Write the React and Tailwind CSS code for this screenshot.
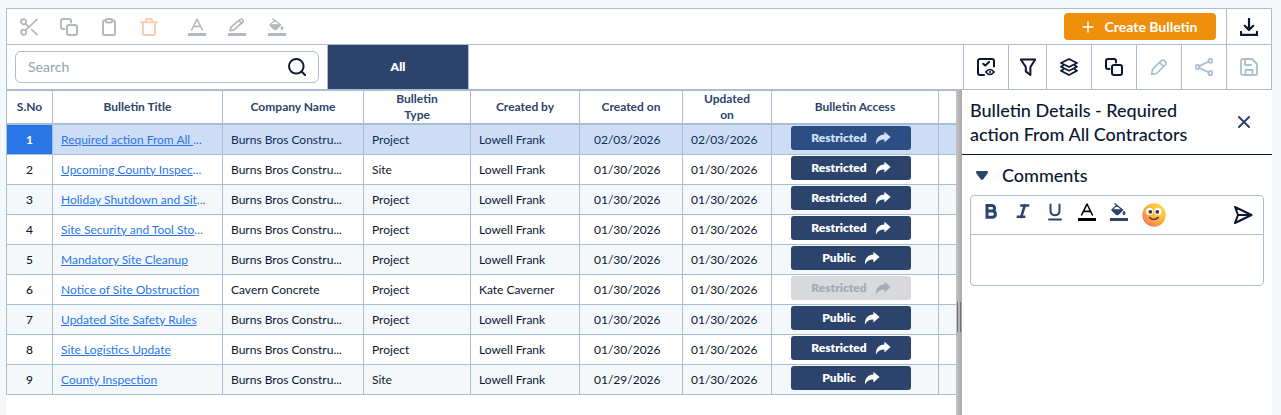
import React from "react";
import clsx from "clsx";

const rows = [
  { title: "Required action From All ...", company: "Burns Bros Constru...", type: "Project", by: "Lowell Frank", created: "02/03/2026", updated: "02/03/2026", access: "Restricted", selected: true },
  { title: "Upcoming County Inspec...", company: "Burns Bros Constru...", type: "Site", by: "Lowell Frank", created: "01/30/2026", updated: "01/30/2026", access: "Restricted" },
  { title: "Holiday Shutdown and Sit...", company: "Burns Bros Constru...", type: "Project", by: "Lowell Frank", created: "01/30/2026", updated: "01/30/2026", access: "Restricted" },
  { title: "Site Security and Tool Sto...", company: "Burns Bros Constru...", type: "Project", by: "Lowell Frank", created: "01/30/2026", updated: "01/30/2026", access: "Restricted" },
  { title: "Mandatory Site Cleanup", company: "Burns Bros Constru...", type: "Project", by: "Lowell Frank", created: "01/30/2026", updated: "01/30/2026", access: "Public" },
  { title: "Notice of Site Obstruction", company: "Cavern Concrete", type: "Project", by: "Kate Caverner", created: "01/30/2026", updated: "01/30/2026", access: "Restricted", disabled: true },
  { title: "Updated Site Safety Rules", company: "Burns Bros Constru...", type: "Project", by: "Lowell Frank", created: "01/30/2026", updated: "01/30/2026", access: "Public" },
  { title: "Site Logistics Update", company: "Burns Bros Constru...", type: "Project", by: "Lowell Frank", created: "01/30/2026", updated: "01/30/2026", access: "Restricted" },
  { title: "County Inspection", company: "Burns Bros Constru...", type: "Site", by: "Lowell Frank", created: "01/29/2026", updated: "01/30/2026", access: "Public" },
];

const Icon = ({ children, className = "size-[18px]", box = "0 0 18 18", stroke = 2 }) => (
  <svg
    viewBox={box}
    className={className}
    fill="none"
    stroke="currentColor"
    strokeWidth={stroke}
    strokeLinecap="round"
    strokeLinejoin="round"
    aria-hidden
  >
    {children}
  </svg>
);

const ScissorsIcon = () => (
  <Icon stroke={1.8}>
    <circle cx="3.6" cy="3.8" r="2.6" />
    <circle cx="3.6" cy="14.2" r="2.6" />
    <path d="M5.6 5.8 8.6 8.6M17 1.4 5.6 12.2M11.8 11.6 17 16.6" />
  </Icon>
);

const CopyIcon = () => (
  <Icon>
    <path d="M4.5 11H3a2 2 0 0 1-2-2V3a2 2 0 0 1 2-2h6a2 2 0 0 1 2 2v1.5" />
    <rect x="7" y="7" width="10" height="10" rx="2" />
  </Icon>
);

const ClipboardIcon = () => (
  <Icon>
    <path d="M6 2.5H4.5A1.5 1.5 0 0 0 3 4v11.5A1.5 1.5 0 0 0 4.500 17h9a1.500 1.500 0 0 0 1.500-1.500V4a1.500 1.500 0 0 0-1.500-1.500H12" />
    <rect x="6" y="1" width="6" height="3.4" rx="1" />
  </Icon>
);

const TrashIcon = () => (
  <Icon>
    <path d="M1 4.200h16M6 4V1.800q0-.8.8-.8h4.400q.8 0 .8.8V4M3 4.500V15.500q0 1.500 1.500 1.500h9q1.500 0 1.500-1.500V4.500" />
  </Icon>
);

const TextColorIcon = () => (
  <Icon stroke={1.6}>
    <path d="M3.600 12 9 1l5.400 11M5.600 8.400h6.800" />
    <path d="M0 15h18v3H0z" fill="currentColor" stroke="none" />
  </Icon>
);

const HighlightIcon = () => (
  <Icon stroke={1.7}>
    <path d="m2.200 12.600.8-3.400 8.800-7.600q1.600-1.200 2.800.1 1.200 1.300-.2 2.800L5.600 12.100ZM11 2.600l2.800 3" />
    <path d="M0 15h18v3H0z" fill="currentColor" stroke="none" />
  </Icon>
);

const FillColorIcon = () => (
  <Icon stroke={1.3}>
    <path d="m4.800.8 7.600 6L8 11.200q-.8.600-1.500 0L2.400 7.600q-.5-.6 0-1.200L6.600 2.400" />
    <path d="M2.200 6.800h10.400L8 11.200q-.8.600-1.500 0Z" fill="currentColor" />
    <path d="M14 8.600q1.700 2.200 0 2.700-1.700-.5 0-2.700Z" fill="currentColor" />
    <path d="M0 15h18v3H0z" fill="currentColor" stroke="none" />
  </Icon>
);

const SearchIcon = () => (
  <Icon className="size-[18px] text-[#0b1a33]">
    <circle cx="8.3" cy="8.3" r="7.3" />
    <path d="m13.800 13.800 3.600 3.600" />
  </Icon>
);

const ReviewIcon = () => (
  <Icon>
    <path d="M7 17H3a2 2 0 0 1-2-2V3a2 2 0 0 1 2-2h12a2 2 0 0 1 2 2v5.500" />
    <path d="m6.200 5.800 2 1.800 3.900-3.700" />
    <path d="M8.800 14q4.100-5 8.300 0-4.200 5-8.300 0Z" strokeWidth="1.7" />
    <circle cx="13" cy="14" r="1.1" fill="currentColor" stroke="none" />
  </Icon>
);

const FilterIcon = () => (
  <Icon>
    <path d="M1.800 1.500h14.400L11.400 9v8L6.800 13.400V9Z" />
  </Icon>
);

const LayersIcon = () => (
  <Icon stroke={1.8}>
    <path d="M9 1 17 5 9 9 1 5Z" />
    <path d="m3 7.600-2 1.100 8 4 8-4-2-1.100M3 11.600l-2 1.100L9 17l8-4.300-2-1.100" />
  </Icon>
);

const PencilIcon = () => (
  <Icon stroke={1.7}>
    <path d="m1.600 16.400.9-5 9-9q1.300-1.200 2.600 0l1.500 1.500q1.200 1.300 0 2.600l-9 9ZM9.600 4.600l3.900 3.900" />
  </Icon>
);

const ShareNodesIcon = () => (
  <Icon stroke={1.8}>
    <circle cx="15.4" cy="2.8" r="2" />
    <circle cx="15.4" cy="15.2" r="2" />
    <circle cx="2.4" cy="9" r="2" />
    <path d="m4.200 8.100 9.400-4.400M4.200 9.900l9.400 4.400" />
  </Icon>
);

const SaveIcon = () => (
  <Icon stroke={1.8}>
    <path d="M3 1h9l5 5v9a2 2 0 0 1-2 2H3a2 2 0 0 1-2-2V3a2 2 0 0 1 2-2Z" />
    <path d="M5 1.500V7h6M5.500 16.500V12h7v4.500" />
  </Icon>
);

const DownloadIcon = () => (
  <Icon stroke={2.2}>
    <path d="M9 1v10.500M4.800 7.800 9 12l4.200-4.200M1 13.800v3.100h16v-3.100" />
  </Icon>
);

const ShareArrow = () => (
  <svg viewBox="0 0 16 14" className="h-3.5 w-4" fill="currentColor" aria-hidden>
    <path d="M9.400.8 15.600 6 9.400 11.400V8.600C5.400 8.500 2.600 10 1 13.600.4 7.600 4 3.700 9.400 3.500Z" />
  </svg>
);

const BoldIcon = () => (
  <Icon stroke={3}>
    <path d="M5 2.500h5q2.600.2 2.600 2.700T10 8H5h5.600q2.800.2 2.800 3t-2.800 3.300H5Z" strokeLinejoin="miter" />
  </Icon>
);

const ItalicIcon = () => (
  <Icon stroke={2.6}>
    <path d="M7.500 2.500h6.500M4 13.800h6M10.800 2.500 7.200 13.800" strokeLinecap="square" />
  </Icon>
);

const UnderlineIcon = () => (
  <Icon>
    <path d="M4.500 1.500V7.500q0 4.700 4.500 4.700t4.500-4.700V1.500M3 16.500h12" />
  </Icon>
);

const SendIcon = () => (
  <Icon className="size-5" box="0 0 20 20">
    <path d="m2 2 16.500 8L2 18l3-8ZM5.500 10h12" />
  </Icon>
);

const Smiley = () => (
  <svg viewBox="0 0 24 24" className="size-6" aria-hidden>
    <defs>
      <radialGradient id="face" cx="0.7" cy="0.25" r="0.85">
        <stop offset="0" stopColor="#ffdc45" />
        <stop offset="0.6" stopColor="#ffb13a" />
        <stop offset="1" stopColor="#f5726a" />
      </radialGradient>
    </defs>
    <circle cx="12" cy="12" r="11.7" fill="url(#face)" />
    <circle cx="7.6" cy="8.6" r="3.5" fill="#fff" />
    <circle cx="16" cy="8.6" r="3.5" fill="#fff" />
    <circle cx="8.3" cy="8.8" r="1.9" fill="#4a2c48" />
    <circle cx="15.3" cy="8.8" r="1.9" fill="#4a2c48" />
    <path d="M7.500 14.400q4.200 4 9 0" fill="none" stroke="#5c3440" strokeWidth="1.4" strokeLinecap="round" />
  </svg>
);

const editTools = [
  { label: "Cut", icon: <ScissorsIcon /> },
  { label: "Copy", icon: <CopyIcon /> },
  { label: "Paste", icon: <ClipboardIcon /> },
  { label: "Delete", icon: <TrashIcon />, danger: true },
];

const colorTools = [
  { label: "Text color", icon: <TextColorIcon /> },
  { label: "Highlight", icon: <HighlightIcon /> },
  { label: "Fill color", icon: <FillColorIcon /> },
];

const viewTools = [
  { label: "Review", icon: <ReviewIcon /> },
  { label: "Filter", icon: <FilterIcon />, narrow: true },
  { label: "Layers", icon: <LayersIcon /> },
  { label: "Duplicate", icon: <CopyIcon /> },
  { label: "Edit", icon: <PencilIcon />, disabled: true },
  { label: "Share", icon: <ShareNodesIcon />, disabled: true },
  { label: "Save", icon: <SaveIcon />, disabled: true },
];

const Toolbar = () => (
  <header className="border border-b-0 border-[#a9bfd1]">
    <div className="flex h-9 items-stretch border-b border-[#a9bfd1]">
      <div className="flex flex-1 items-center gap-[22px] pl-[13px] text-[#b4b8bf]">
        {editTools.map((t) => (
          <button key={t.label} aria-label={t.label} disabled className={clsx(t.danger && "text-[#f8cdb8]")}>
            {t.icon}
          </button>
        ))}
        <div className="ml-2 flex gap-[22px]">
          {colorTools.map((t) => (
            <button key={t.label} aria-label={t.label} disabled>
              {t.icon}
            </button>
          ))}
        </div>
      </div>
      <div className="flex items-center pr-2.5">
        <button className="flex h-[27px] w-[152px] items-center justify-center gap-2.5 rounded bg-[#ee900b] text-sm font-bold text-white">
          <Icon className="size-3" box="0 0 12 12" stroke={1.5}>
            <path d="M6 1v10M1 6h10" />
          </Icon>
          Create Bulletin
        </button>
      </div>
      <button aria-label="Download" className="flex w-[45px] items-center justify-center border-l border-[#a9bfd1] text-[#0b1730]">
        <DownloadIcon />
      </button>
    </div>

    <div className="flex h-[45px] items-stretch border-b border-[#a9bfd1]">
      <div className="flex w-80 items-center px-2">
        <label className="flex h-8 w-full items-center rounded-md border border-[#a9bfd1] px-3">
          <input
            type="text"
            aria-label="Search"
            placeholder="Search"
            className="min-w-0 flex-1 text-sm outline-none placeholder:text-[#9a9fa8]"
          />
          <SearchIcon />
        </label>
      </div>
      <button className="w-[142px] border-x border-[#a9bfd1] bg-[#2c446b] text-xs font-extrabold text-white">
        All
      </button>
      <div className="flex-1" />
      {viewTools.map((t) => (
        <button
          key={t.label}
          aria-label={t.label}
          disabled={t.disabled}
          className={clsx(
            "flex items-center justify-center border-l border-[#a9bfd1]",
            t.narrow ? "w-[38px]" : "w-[45px]",
            t.disabled ? "text-[#a9bfd1]" : "text-[#0b1730]"
          )}
        >
          {t.icon}
        </button>
      ))}
    </div>
  </header>
);

const Th = ({ children }) => (
  <th className="h-[34px] border-r border-b-2 border-[#a9bfd1] p-0 leading-4 font-bold">
    {children}
  </th>
);

const Td = ({ children, className }) => (
  <td className={clsx("h-[30px] border-r border-b border-[#a9bfd1] py-0 whitespace-nowrap", className)}>{children}</td>
);

// Only the words are underlined, not the dots of a shortened title
const TitleLink = ({ title }) => (
  <>
    <a href="#" className="whitespace-pre underline">
      {title.replace("...", "")}
    </a>
    {title.endsWith("...") && "..."}
  </>
);

const BulletinTable = () => (
  <table className="w-full table-fixed border-separate border-spacing-0 border-t border-l border-[#a9bfd1] text-xs text-[#0b1730]">
    <colgroup>
      <col className="w-[46px]" />
      <col className="w-[170px]" />
      <col className="w-[141px]" />
      <col className="w-[107px]" />
      <col className="w-[109px]" />
      <col className="w-[103px]" />
      <col className="w-[89px]" />
      <col className="w-[167px]" />
      <col />
    </colgroup>
    <thead className="text-[#2c446b]">
      <tr>
        <Th>S.No</Th>
        <Th>Bulletin Title</Th>
        <Th>Company Name</Th>
        <Th>
          Bulletin
          <br />
          Type
        </Th>
        <Th>Created by</Th>
        <Th>Created on</Th>
        <Th>
          Updated
          <br />
          on
        </Th>
        <Th>Bulletin Access</Th>
        <td className="border-b-2 border-[#a9bfd1]" />
      </tr>
    </thead>
    <tbody>
      {rows.map((row, i) => (
        <tr key={row.title} className={row.selected ? "bg-[#cdddf5] text-[#112b59]" : "odd:bg-[#f4f8fb]"}>
          <Td className={clsx("text-center", row.selected ? "bg-[#2a76e8] font-bold text-white" : "font-medium")}>
            {i + 1}
          </Td>
          <Td className="px-2 text-[#2a76e8]">
            <TitleLink title={row.title} />
          </Td>
          <Td className="px-2">{row.company}</Td>
          <Td className="px-2">{row.type}</Td>
          <Td className="px-2">{row.by}</Td>
          <Td className="pl-3.5">{row.created}</Td>
          <Td className="px-2">{row.updated}</Td>
          <Td className="pt-px pr-2 align-top">
            <button
              disabled={row.disabled}
              className={clsx(
                "mx-auto flex h-6 w-[120px] items-center justify-center gap-2 rounded-[3px] font-extrabold",
                row.disabled
                  ? "bg-[#d7d9dd] text-[#a5abb6]"
                  : row.selected
                    ? "bg-[#2c4e85] text-[#d3e2f9]"
                    : "bg-[#2c446b] text-white"
              )}
            >
              {row.access}
              <ShareArrow />
            </button>
          </Td>
          <td className="border-b border-[#a9bfd1]" />
        </tr>
      ))}
    </tbody>
  </table>
);

const Splitter = () => (
  <div className="flex w-1.5 items-start justify-center gap-0.5 bg-linear-to-r from-[#c4c4c4] to-[#a6a6a6] pt-[212px]">
    <span className="h-[30px] w-px bg-[#6f6f6f]" />
    <span className="h-[30px] w-px bg-[#6f6f6f]" />
  </div>
);

const DetailsPanel = () => (
  <aside className="w-[310px] text-[#0b1730]">
    <div className="flex h-[65px] items-center gap-8 border-b border-[#0b1730] pr-[22px] pl-2">
      <h2 className="flex-1 text-lg leading-6 font-medium">Bulletin Details - Required action From All Contractors</h2>
      <button aria-label="Close" className="text-[#2c446b]">
        <Icon className="size-3" box="0 0 12 12">
          <path d="m1 1 10 10M11 1 1 11" />
        </Icon>
      </button>
    </div>
    <section className="px-2">
      <button className="flex h-10 w-full items-center gap-3.5 pl-1.5 text-lg font-medium">
        <svg viewBox="0 0 12 9" className="h-[9px] w-3 text-[#2c446b]" fill="currentColor" aria-hidden>
          <path d="M1.500 0h9q1.500 0 1.500 1.300 0 .7-.6 1.400L7.200 8.200Q6 9.500 4.800 8.200L.6 2.700Q0 2 0 1.300 0 0 1.500 0Z" />
        </svg>
        Comments
      </button>
      <div className="rounded border border-[#a9bfd1]">
        <div className="flex h-[39px] items-start gap-3.5 border-b border-[#a9bfd1] pt-[7px] pr-2.5 pl-[11px] text-[#2c446b]">
          <button aria-label="Bold"><BoldIcon /></button>
          <button aria-label="Italic"><ItalicIcon /></button>
          <button aria-label="Underline"><UnderlineIcon /></button>
          <button aria-label="Text color" className="text-black"><TextColorIcon /></button>
          <button aria-label="Fill color"><FillColorIcon /></button>
          <button aria-label="Emoji"><Smiley /></button>
          <button aria-label="Send" className="mt-0.5 ml-auto text-[#0b1730]"><SendIcon /></button>
        </div>
        <textarea aria-label="Comment" className="block h-[50px] w-full resize-none px-2 py-1 text-sm outline-none" />
      </div>
    </section>
  </aside>
);

export default function App() {
  return (
    <div className="flex min-h-screen flex-col bg-[#f4f8fb] pt-2 pr-[9px] pl-1.5 font-['Lato',sans-serif]">
      <div className="flex flex-1 flex-col bg-white">
        <Toolbar />
        <main className="flex flex-1">
          <div className="min-w-0 flex-1">
            <BulletinTable />
          </div>
          <Splitter />
          <DetailsPanel />
        </main>
      </div>
    </div>
  );
}
